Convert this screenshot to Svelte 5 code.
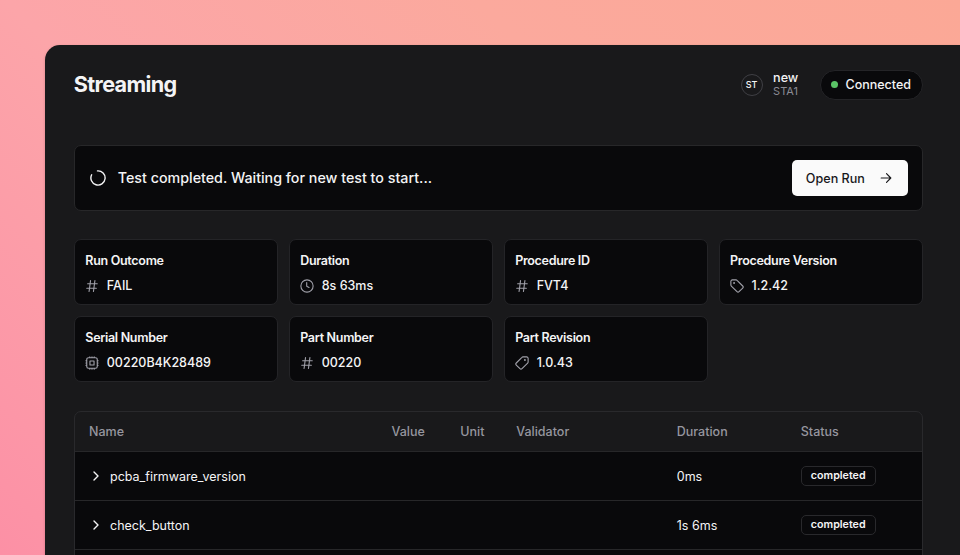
<script>
  const cards = [
    { label: 'Run Outcome', icon: 'hash', value: 'FAIL' },
    { label: 'Duration', icon: 'clock', value: '8s 63ms' },
    { label: 'Procedure ID', icon: 'hash', value: 'FVT4' },
    { label: 'Procedure Version', icon: 'tag', value: '1.2.42' },
    { label: 'Serial Number', icon: 'cpu', value: '00220B4K28489' },
    { label: 'Part Number', icon: 'hash', value: '00220' },
    { label: 'Part Revision', icon: 'tag-flip', value: '1.0.43' }
  ];
  const columns = ['Name', 'Value', 'Unit', 'Validator', 'Duration', 'Status'];
  const rows = [
    { name: 'pcba_firmware_version', duration: '0ms', status: 'completed' },
    { name: 'check_button', duration: '1s 6ms', status: 'completed' }
  ];
</script>

{#snippet icon(name)}
  <svg class="icon" class:flip={name === 'tag-flip'} viewBox="0 0 24 24">
    {#if name === 'hash'}
      <path d="M4.500 8.250h16.500m-18 7.500h16.500M9.500 2.500l-2.500 19M17 2.500l-2.500 19" />
    {:else if name === 'clock'}
      <path d="M11.500 6v6.500l4 2M22.500 12a10.500 10.500 0 1 1-21 0 10.500 10.500 0 0 1 21 0Z" />
    {:else if name === 'cpu'}
      <path d="M8.250 3v-1.500M3 8.250H1.500M22.500 8.250H21M3 12H1.500M22.500 12H21M3 15.750H1.500M22.500 15.750H21M8.250 22.500V21M12 3V1.500M12 22.500V21M15.750 3V1.500M15.750 22.500V21M6 21h12a3 3 0 0 0 3-3V6a3 3 0 0 0-3-3H6a3 3 0 0 0-3 3v12a3 3 0 0 0 3 3ZM8.500 8.500h7v7h-7Z" />
    {:else}
      <path d="M10.300 1.500H4A2.500 2.500 0 0 0 1.500 4v6.300c0 .7.300 1.300.8 1.800l9.700 9.700a2.500 2.500 0 0 0 3.500 0l6.300-6.300a2.500 2.500 0 0 0 0-3.500l-9.700-9.700a2.500 2.500 0 0 0-1.800-.8Z" />
      <circle cx="7" cy="7" r="0.700" />
    {/if}
  </svg>
{/snippet}

<div class="backdrop">
  <main class="window">
    <header>
      <h1>Streaming</h1>
      <div class="station">
        <span class="avatar">ST</span>
        <div class="ident"><span class="who">new</span><span class="sta">STA1</span></div>
        <span class="connection"><i></i>Connected</span>
      </div>
    </header>

    <section class="banner">
      <svg class="spinner" viewBox="0 0 16 16"><path d="M7.500 .9A7.100 7.100 0 1 1 1.650 4.800" /></svg>
      <p>Test completed. Waiting for new test to start...</p>
      <button>Open Run
        <svg viewBox="0 0 12 12"><path d="M1.200 6h9.600M6.500 1.700 10.800 6l-4.300 4.300" /></svg>
      </button>
    </section>

    <section class="cards">
      {#each cards as card}
        <article>
          <h2>{card.label}</h2>
          <div class="value">{@render icon(card.icon)}<span>{card.value}</span></div>
        </article>
      {/each}
    </section>

    <section class="table">
      <div class="row head">
        {#each columns as column}<span>{column}</span>{/each}
      </div>
      {#each rows as row}
        <div class="row">
          <div class="name">
            <svg viewBox="0 0 6 10"><path d="M1 1l4 4-4 4" /></svg>
            {row.name}
          </div>
          <span></span><span></span><span></span>
          <span>{row.duration}</span>
          <span><b class="badge">{row.status}</b></span>
        </div>
      {/each}
      <div class="row"></div>
    </section>
  </main>
</div>

<style>
  :global(body) { overflow: hidden; }
  .backdrop {
    box-sizing: border-box;
    width: 960px;
    height: 555px;
    padding: 45px 0 0 45px;
    overflow: hidden;
    background: linear-gradient(45deg, #fc90a5 0%, #fc96a7 10%, #fca5a9 37%, #fba99d 68%, #fba896 100%);
    font-family: Inter, "Liberation Sans", sans-serif;
    font-size: 12.5px;
    color: #f4f4f5;
  }
  .window {
    box-sizing: border-box;
    height: 510px;
    padding: 24px 37.500px 0 28.800px;
    overflow: hidden;
    border-radius: 15px 0 0 0;
    background: #19191b;
    box-shadow: 0 1px 3px rgb(60 10 20 / 0.2);
  }
  header { display: flex; align-items: center; justify-content: space-between; height: 31px; }
  h1 { margin: 0; font-size: 21.600px; font-weight: 700; letter-spacing: -0.650px; line-height: 31px; }
  .station { display: flex; align-items: center; }
  .avatar {
    box-sizing: border-box;
    width: 22px;
    height: 22px;
    border: 1px solid #3f3f44;
    border-radius: 50%;
    font-size: 9px;
    font-weight: 500;
    line-height: 20px;
    text-align: center;
  }
  .ident { display: flex; flex-direction: column; margin: -1px 21.500px 0 10.500px; }
  .who { font-size: 12.600px; font-weight: 500; line-height: 14px; }
  .sta { font-size: 11px; line-height: 12px; color: #8b8b94; }
  .connection {
    box-sizing: border-box;
    display: flex;
    align-items: center;
    gap: 7px;
    height: 30px;
    padding: 0 10.500px 0 10.200px;
    border: 1px solid #242427;
    border-radius: 15px;
    background: #09090b;
    font-weight: 500;
  }
  .connection i { width: 7.500px; height: 7.500px; border-radius: 50%; background: #5ac466; }
  .banner {
    box-sizing: border-box;
    display: flex;
    align-items: center;
    height: 66px;
    margin-top: 45px;
    padding: 0 14px 0 15px;
    border: 1px solid #272729;
    border-radius: 7px;
    background: #09090b;
  }
  svg { display: block; flex: none; fill: none; stroke: currentColor; stroke-linecap: round; stroke-linejoin: round; }
  .spinner { width: 16px; height: 16px; stroke-width: 1.400; }
  .banner p { flex: 1; margin: -1px 0 0 12px; font-size: 14.270px; font-weight: 500; }
  button {
    display: flex;
    align-items: center;
    justify-content: space-between;
    width: 116px;
    height: 36px;
    padding: 0 15.500px 0 14.300px;
    border: 0;
    border-radius: 5px;
    background: #fafafa;
    color: #18181b;
    font: 500 12.600px Inter, sans-serif;
  }
  button svg { width: 12px; height: 12px; stroke-width: 1.200; }
  .cards { display: grid; grid-template-columns: repeat(4, 1fr); gap: 11px; margin-top: 28px; }
  article {
    box-sizing: border-box;
    height: 66px;
    padding: 12px 10.500px 0;
    border: 1px solid #242427;
    border-radius: 7px;
    background: #09090b;
  }
  h2 { margin: 0; font-size: 12.500px; font-weight: 600; line-height: 18px; letter-spacing: -0.300px; }
  .value { display: flex; align-items: center; gap: 7.500px; margin-top: 7px; line-height: 18px; font-weight: 500; }
  .icon { width: 14px; height: 14px; color: #a1a1aa; stroke-width: 1.900; }
  .flip { transform: scaleX(-1); }
  .table {
    margin-top: 29px;
    height: 200px;
    overflow: hidden;
    border: 1px solid #29292c;
    border-radius: 7px 7px 0 0;
    background: #19191b;
  }
  .row {
    box-sizing: border-box;
    display: grid;
    grid-template-columns: 302.500px 68.800px 56px 160.500px 124px 1fr;
    align-items: center;
    height: 49px;
    padding-left: 14.200px;
    border-bottom: 1px solid #272729;
    background: #09090b;
  }
  .head { height: 40px; background: none; color: #96969f; font-weight: 500; }
  .name { display: flex; align-items: center; gap: 11px; padding-left: 4px; }
  .name svg { width: 6px; height: 10px; stroke-width: 1.400; }
  .badge {
    box-sizing: border-box;
    display: inline-block;
    vertical-align: middle;
    height: 20px;
    padding: 0 9px;
    border: 1px solid #29292c;
    border-radius: 5px;
    font-size: 10.700px;
    font-weight: 600;
    line-height: 18px;
  }
</style>
